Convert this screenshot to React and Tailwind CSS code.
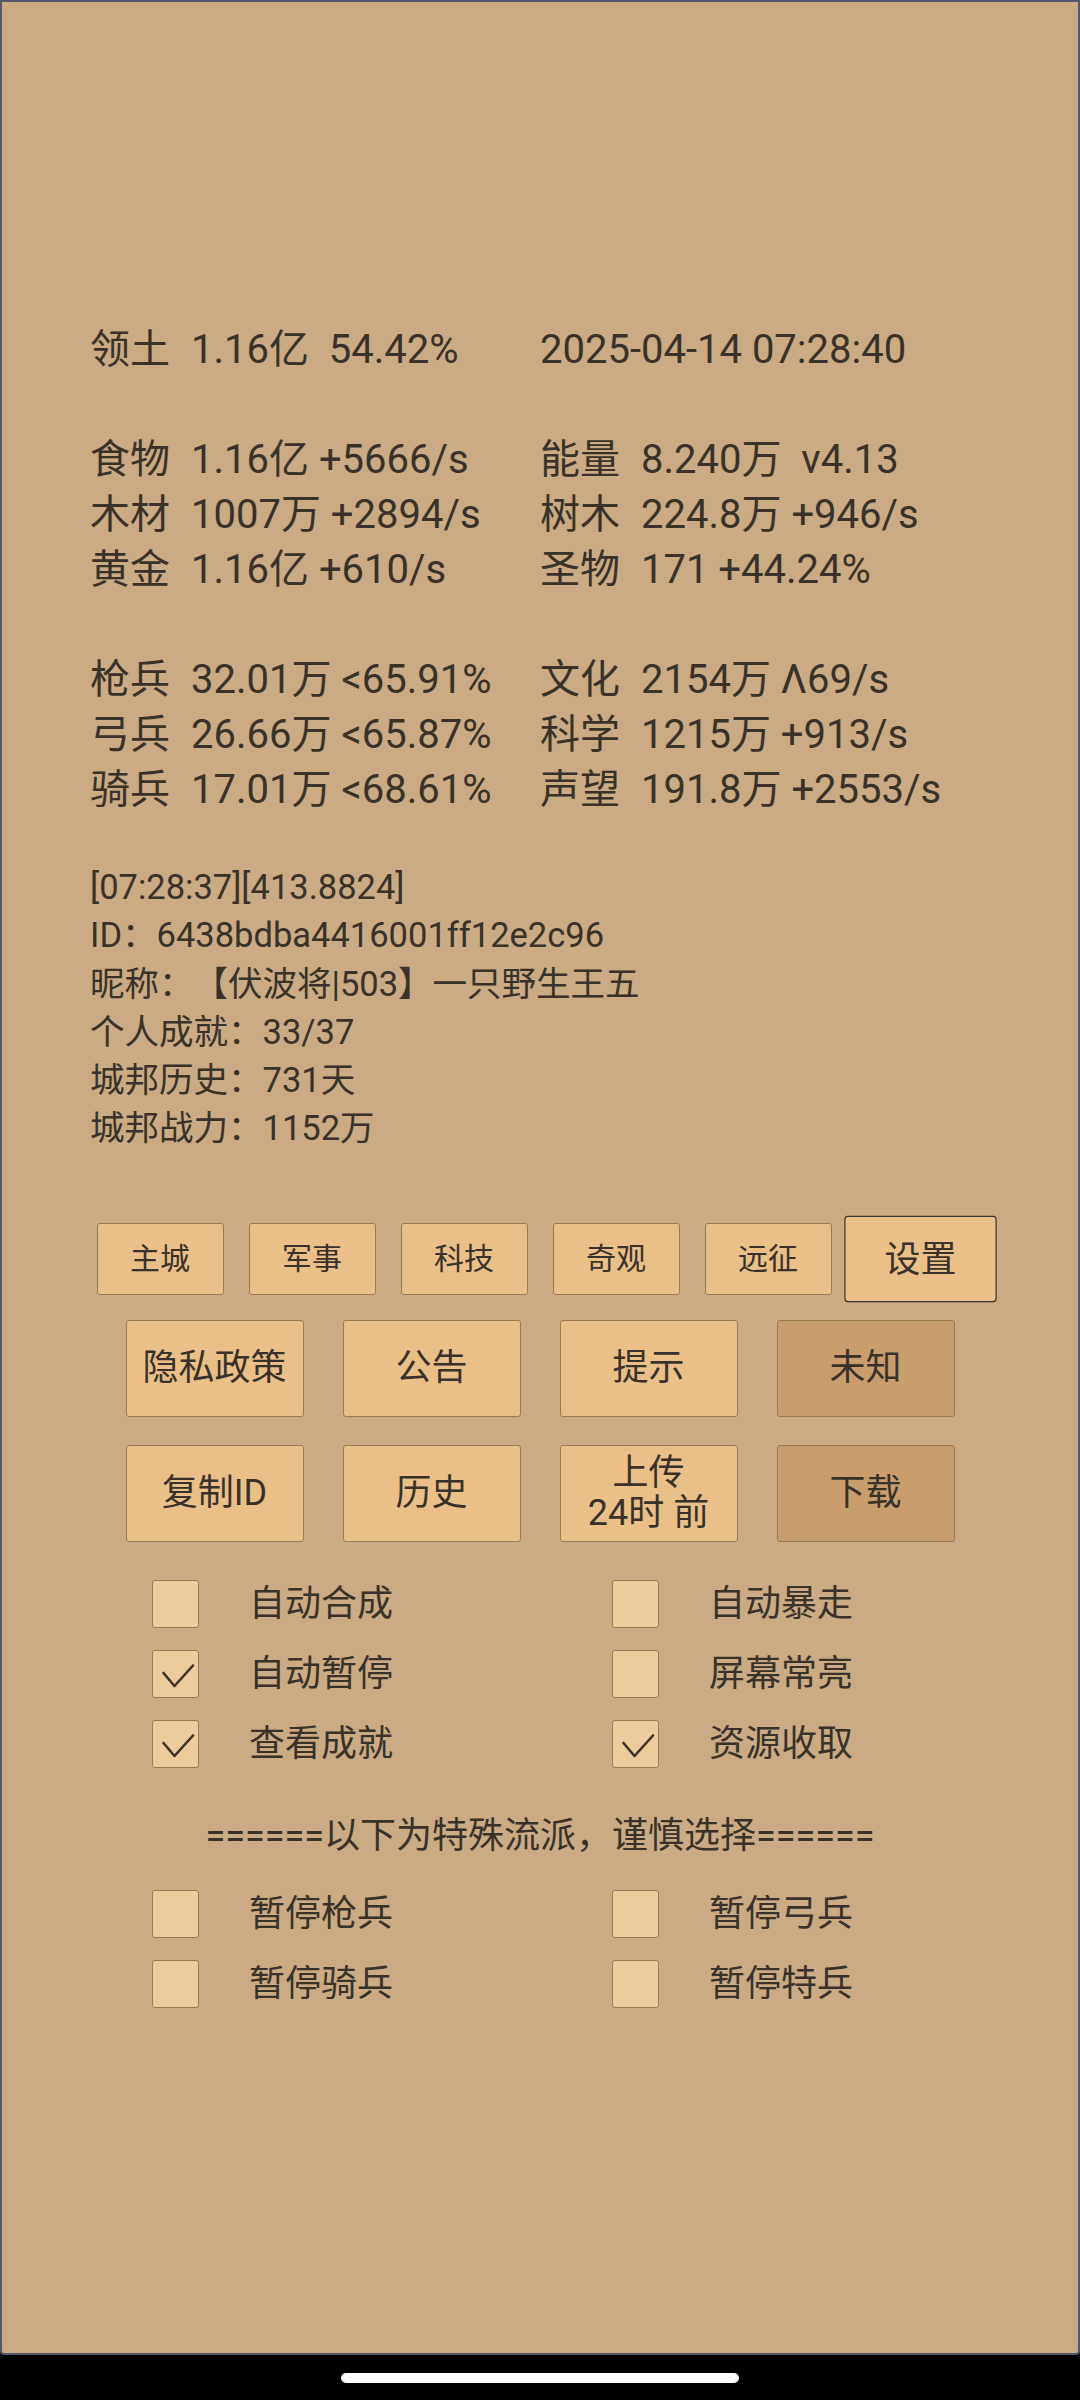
import React from 'react';

// ---------------------------------------------------------------------------
// 数据
// ---------------------------------------------------------------------------

const STATS = [
  [['领土', '1.16亿  54.42%'], [null, '2025-04-14 07:28:40']],
  null,
  [['食物', '1.16亿 +5666/s'], ['能量', '8.240万  v4.13']],
  [['木材', '1007万 +2894/s'], ['树木', '224.8万 +946/s']],
  [['黄金', '1.16亿 +610/s'], ['圣物', '171 +44.24%']],
  null,
  [['枪兵', '32.01万 <65.91%'], ['文化', '2154万 Λ69/s']],
  [['弓兵', '26.66万 <65.87%'], ['科学', '1215万 +913/s']],
  [['骑兵', '17.01万 <68.61%'], ['声望', '191.8万 +2553/s']],
];

const LOG = [
  '[07:28:37][413.8824]',
  'ID：6438bdba4416001ff12e2c96',
  '昵称：【伏波将|503】一只野生王五',
  '个人成就：33/37',
  '城邦历史：731天',
  '城邦战力：1152万',
];

const TABS = ['主城', '军事', '科技', '奇观', '远征', '设置'];

const OPTIONS = [
  ['自动合成', false, '自动暴走', false],
  ['自动暂停', true, '屏幕常亮', false],
  ['查看成就', true, '资源收取', true],
];

const SPECIAL = [
  ['暂停枪兵', false, '暂停弓兵', false],
  ['暂停骑兵', false, '暂停特兵', false],
];

// ---------------------------------------------------------------------------
// 小组件
// ---------------------------------------------------------------------------

function StatCell({ cell, wide }) {
  const [label, value] = cell;
  return (
    <div className={`flex whitespace-pre ${wide ? 'w-[450px]' : ''}`}>
      {label && <span className="w-[101px] shrink-0">{label}</span>}
      <span>{value}</span>
    </div>
  );
}

function BigButton({ children, dark }) {
  return (
    <div
      className={`w-[178px] h-[97px] flex flex-col items-center justify-center text-center rounded-[3px] border border-[#9a7a50] text-[36px] leading-[40px] ${
        dark ? 'bg-[#c99e6c]' : 'bg-[#eac088]'
      }`}
    >
      {children}
    </div>
  );
}

function CheckBox({ checked }) {
  return (
    <div className="w-[47px] h-[48px] shrink-0 rounded-[3px] border border-[#9a7a52] bg-[#edcb9a]">
      {checked && (
        <svg width="47" height="48" viewBox="0 0 47 48" fill="none">
          <polyline points="10.5,22 21.5,35 40,14.5" stroke="#3a342c" strokeWidth="2.6" strokeLinecap="round" strokeLinejoin="round" />
        </svg>
      )}
    </div>
  );
}

function OptionRows({ rows }) {
  return (
    <div className="flex flex-col gap-y-[22px] pl-[150px]">
      {rows.map(([a, ca, b, cb]) => (
        <div key={a} className="flex h-[48px] items-center text-[36px]">
          <div className="w-[460px] flex items-center gap-[50px]">
            <CheckBox checked={ca} />
            <span>{a}</span>
          </div>
          <div className="flex items-center gap-[50px]">
            <CheckBox checked={cb} />
            <span>{b}</span>
          </div>
        </div>
      ))}
    </div>
  );
}

// ---------------------------------------------------------------------------
// 主页面
// ---------------------------------------------------------------------------

export default function App() {
  return (
    <div className="w-[1080px] h-[2400px] bg-black flex flex-col font-[Roboto,'Noto_Sans_CJK_SC',sans-serif] text-[#38322a] [text-spacing-trim:space-all]">
      <div className="h-[2355px] shrink-0 bg-[#caab83] border-2 border-[#545a6e] rounded-b-[4px] pt-[320px]">

        {/* ── 资源 ── */}
        <section className="pl-[88px] text-[40px] leading-[55px]">
          {STATS.map((row, i) =>
            row ? (
              <div key={i} className="flex h-[55px]">
                <StatCell cell={row[0]} wide />
                <StatCell cell={row[1]} />
              </div>
            ) : (
              <div key={i} className="h-[55px]" />
            )
          )}
        </section>

        {/* ── 日志 ── */}
        <section className="pl-[88px] mt-[46px] text-[34.5px] leading-[48.3px]">
          {LOG.map(l => (
            <div key={l} className="whitespace-pre">{l}</div>
          ))}
        </section>

        {/* ── 标签页 ── */}
        <section className="mt-[70px] flex justify-center gap-[25px]">
          {TABS.map((t, i) => (
            <div
              key={t}
              className={`w-[127px] h-[72px] flex items-center justify-center rounded-[3px] bg-[#eac088] text-[30px] ${
                i === TABS.length - 1 ? 'scale-[1.2] border-[1.5px] border-[#3a3530]' : 'border border-[#9a7a50]'
              }`}
            >
              {t}
            </div>
          ))}
        </section>

        <section className="mt-[25px] flex justify-center gap-[39px]">
          <BigButton>隐私政策</BigButton>
          <BigButton>公告</BigButton>
          <BigButton>提示</BigButton>
          <BigButton dark>未知</BigButton>
        </section>

        <section className="mt-[28px] flex justify-center gap-[39px]">
          <BigButton>复制ID</BigButton>
          <BigButton>历史</BigButton>
          <BigButton>
            <span>上传</span>
            <span>24时 前</span>
          </BigButton>
          <BigButton dark>下载</BigButton>
        </section>

        {/* ── 选项 ── */}
        <section className="mt-[38px]">
          <OptionRows rows={OPTIONS} />
        </section>

        <div className="mt-[44px] h-[48px] leading-[48px] text-center text-[36px] whitespace-pre">
          ======以下为特殊流派，谨慎选择======
        </div>

        <section className="mt-[30px]">
          <OptionRows rows={SPECIAL} />
        </section>
      </div>

      {/* ── 底部手势条 ── */}
      <div className="flex-1 flex justify-center pt-[18px]">
        <div className="w-[398px] h-[10px] rounded-full bg-white" />
      </div>
    </div>
  );
}
